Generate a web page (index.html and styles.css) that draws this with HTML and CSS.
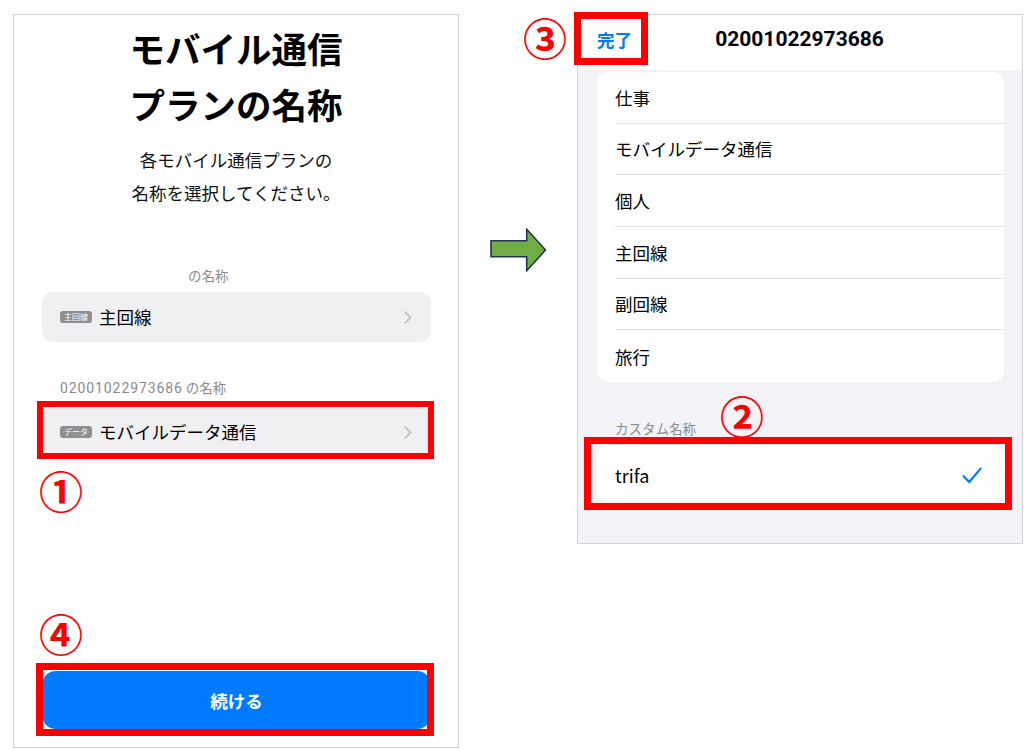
FILE: index.html
```html
<!DOCTYPE html>
<html lang="ja">
<head>
<meta charset="utf-8">
<title>モバイル通信プランの名称</title>
<link rel="stylesheet" href="styles.css">
</head>
<body>
<div class="canvas">
  <section class="phone phone-left">
    <h1 class="title">モバイル通信<br>プランの名称</h1>
    <p class="lead">各モバイル通信プランの<br>名称を選択してください。</p>
    <div class="group">
      <div class="group-label label-first">の名称</div>
      <div class="plan-row">
        <span class="badge">主回線</span>
        <span class="plan-name">主回線</span>
        <svg class="chev" viewBox="0 0 8 13"><path d="M1.2 1.2 L6.6 6.5 L1.2 11.8"/></svg>
      </div>
      <div class="group-label label-second"><span class="num">02001022973686</span> の名称</div>
      <div class="plan-row row-data">
        <span class="badge">データ</span>
        <span class="plan-name">モバイルデータ通信</span>
        <svg class="chev" viewBox="0 0 8 13"><path d="M1.2 1.2 L6.6 6.5 L1.2 11.8"/></svg>
      </div>
    </div>
    <button class="continue" type="button">続ける</button>
  </section>

  <svg class="arrow" viewBox="0 0 58 44">
    <polygon points="2,12.7 37.7,12.7 37.7,1.3 56.5,22 37.7,42.7 37.7,28.7 2,28.7"/>
  </svg>

  <section class="phone phone-right">
    <header class="nav">
      <span class="done">完了</span>
      <span class="nav-title">02001022973686</span>
      <span></span>
    </header>
    <div class="sheet">
      <ul class="card options">
        <li>仕事</li>
        <li>モバイルデータ通信</li>
        <li>個人</li>
        <li>主回線</li>
        <li>副回線</li>
        <li>旅行</li>
      </ul>
      <div class="section-label">カスタム名称</div>
      <div class="card custom">
        <span class="custom-name">trifa</span>
        <svg class="check" viewBox="0 0 20 17"><path d="M1.6 9.2 L7.2 15 L18.6 1.6"/></svg>
      </div>
    </div>
  </section>

  <div class="box box-data"></div>
  <div class="box box-continue"></div>
  <div class="box box-done"></div>
  <div class="box box-custom"></div>

  <span class="step step-1">①</span>
  <span class="step step-2">②</span>
  <span class="step step-3">③</span>
  <span class="step step-4">④</span>
</div>
</body>
</html>
```

FILE: styles.css
```css
* {
  box-sizing: border-box;
  margin: 0;
  padding: 0;
}

body {
  background: #ffffff;
  font-family: "Noto Sans CJK JP", "Noto Sans", sans-serif;
  color: #000000;
}

.canvas {
  position: relative;
  width: 1024px;
  height: 749px;
  display: flex;
  align-items: flex-start;
  padding: 14px 0 0 13px;
  overflow: hidden;
}

.phone {
  flex: none;
  width: 446px;
  border: 1px solid #d4d4d4;
  background: #ffffff;
}

/* ---------- left phone ---------- */
.phone-left {
  height: 734px;
  display: flex;
  flex-direction: column;
  padding-bottom: 18px;
}

.title {
  margin-top: 5px;
  font-size: 35.5px;
  font-weight: 700;
  line-height: 56px;
  text-align: center;
}

.lead {
  margin-top: 11px;
  font-size: 17.5px;
  line-height: 33px;
  text-align: center;
  color: #111111;
}

.group {
  padding: 0 27px 0 28px;
}

.group-label {
  font-size: 13.5px;
  line-height: 18px;
  color: #8a8a8e;
}

.label-first {
  margin-top: 57px;
  padding-left: 146px;
}

.label-second {
  margin-top: 36px;
  padding-left: 18px;
}

.num {
  font-family: Roboto, "Noto Sans", sans-serif;
  font-size: 14px;
  letter-spacing: 0.9px;
}

.plan-row {
  margin-top: 8px;
  height: 50px;
  display: flex;
  align-items: center;
  padding: 0 19px 0 18px;
  border-radius: 11px;
  background: #f0f0f2;
}

.row-data {
  margin-top: 10px;
}

.badge {
  flex: none;
  height: 12px;
  padding: 0 4px;
  border-radius: 3px;
  background: #8e8e93;
  color: #ffffff;
  font-size: 8px;
  line-height: 12px;
}

.plan-name {
  flex: 1;
  margin-left: 7px;
  font-size: 17.5px;
  line-height: 24px;
}

.chev {
  flex: none;
  width: 8px;
  height: 13px;
}

.chev path {
  fill: none;
  stroke: #c2c2c6;
  stroke-width: 1.8;
  stroke-linecap: round;
  stroke-linejoin: round;
}

.continue {
  margin: auto 27px 0 28px;
  height: 58px;
  border: none;
  border-radius: 14px;
  background: #007aff;
  color: #ffffff;
  font-family: "Noto Sans CJK JP", "Noto Sans", sans-serif;
  font-size: 17.5px;
  font-weight: 700;
}

/* ---------- arrow ---------- */
.arrow {
  flex: none;
  width: 58px;
  height: 44px;
  margin: 214px 30px 0 30px;
}

.arrow polygon {
  fill: #70ad47;
  stroke: #22364d;
  stroke-width: 1.6;
  stroke-linejoin: miter;
}

/* ---------- right phone ---------- */
.phone-right {
  height: 530px;
  display: flex;
  flex-direction: column;
}

.nav {
  flex: none;
  height: 55px;
  display: grid;
  grid-template-columns: 1fr auto 1fr;
  align-items: center;
  padding: 0 20px 7px 19px;
  background: #ffffff;
}

.done {
  color: #007aff;
  font-size: 17.5px;
  font-weight: 700;
}

.nav-title {
  font-family: Roboto, "Noto Sans", sans-serif;
  font-size: 21px;
  font-weight: 700;
  color: #000000;
}

.sheet {
  flex: 1;
  padding: 2px 18px 0 19px;
  background: #f2f2f7;
}

.card {
  background: #ffffff;
  border-radius: 12px;
}

.options {
  list-style: none;
  padding-left: 18px;
}

.options li {
  height: 51.67px;
  display: flex;
  align-items: center;
  font-size: 17.5px;
  border-bottom: 1px solid #e3e3e7;
}

.options li:last-child {
  border-bottom: none;
}

.section-label {
  margin-top: 37px;
  padding-left: 18px;
  font-size: 13.5px;
  line-height: 18px;
  color: #8a8a8e;
}

.custom {
  margin-top: 8px;
  height: 57px;
  display: flex;
  align-items: center;
  justify-content: space-between;
  padding: 4px 22px 0 18px;
}

.custom-name {
  font-size: 18px;
}

.check {
  width: 20px;
  height: 17px;
}

.check path {
  fill: none;
  stroke: #007aff;
  stroke-width: 2.2;
  stroke-linecap: round;
  stroke-linejoin: round;
}

/* ---------- annotations (overlay) ---------- */
.box {
  position: absolute;
  border: 7px solid #ff0000;
}

.box-data {
  left: 37px;
  top: 401px;
  width: 397px;
  height: 58px;
  border-width: 6px;
}

.box-continue {
  left: 36px;
  top: 663px;
  width: 398px;
  height: 73px;
}

.box-done {
  left: 574px;
  top: 12px;
  width: 74px;
  height: 53px;
}

.box-custom {
  left: 584px;
  top: 437px;
  width: 428px;
  height: 73px;
}

.step {
  position: absolute;
  width: 44px;
  height: 44px;
  color: #ff0000;
  font-size: 44px;
  font-weight: 700;
  line-height: 44px;
  text-align: center;
}

.step-1 {
  left: 39px;
  top: 468px;
}

.step-2 {
  left: 720px;
  top: 393px;
}

.step-3 {
  left: 523px;
  top: 15px;
}

.step-4 {
  left: 39px;
  top: 611px;
}
```
